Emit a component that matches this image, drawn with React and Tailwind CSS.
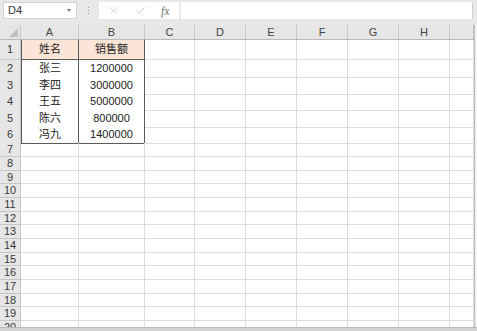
import React from "react";
import { X, Check } from "lucide-react";

const cols = ["A", "B", "C", "D", "E", "F", "G", "H", ""];
const gridCols = "grid grid-cols-[21px_58px_66px_50px_51px_51px_51px_51px_51px_24px]";

const data = [
  { n: 1, h: "h-[20px]", a: "姓名", b: "销售额", head: true },
  { n: 2, h: "h-[17px]", a: "张三", b: "1200000" },
  { n: 3, h: "h-[16px]", a: "李四", b: "3000000" },
  { n: 4, h: "h-[17px]", a: "王五", b: "5000000" },
  { n: 5, h: "h-[16px]", a: "陈六", b: "800000" },
  { n: 6, h: "h-[17px]", a: "冯九", b: "1400000" },
];

const emptyRows = [
  { n: 7, h: "h-[14px]" },
  { n: 8, h: "h-[14px]" },
  { n: 9, h: "h-[13px]" },
  { n: 10, h: "h-[14px]" },
  { n: 11, h: "h-[14px]" },
  { n: 12, h: "h-[13px]" },
  { n: 13, h: "h-[14px]" },
  { n: 14, h: "h-[14px]" },
  { n: 15, h: "h-[13px]" },
  { n: 16, h: "h-[14px]" },
  { n: 17, h: "h-[14px]" },
  { n: 18, h: "h-[13px]" },
  { n: 19, h: "h-[14px]" },
  { n: 20, h: "h-[14px]" },
];

const RowNum = ({ n }) => (
  <div className="bg-[#e6e6e6] border-r border-b border-[#c6c6c6] flex items-center justify-center text-[11px] text-[#3a3a3a] leading-none">
    {n}
  </div>
);

const Blank = () => <div className="border-r border-b border-[#dcdcdc]" />;

export default function App() {
  return (
    <div
      className="w-[477px] h-[331px] bg-[#e8e8e8] overflow-hidden flex flex-col"
      style={{ fontFamily: '"Liberation Sans", "Noto Sans CJK SC", sans-serif' }}
    >
      {/* Formula bar */}
      <div className="h-[20px] flex items-center pl-[3px] pr-[4px] pt-[1px] shrink-0">
        <div className="w-[74px] h-[17px] bg-white border border-[#d4d4d4] flex items-center justify-between pl-[4px] pr-[5px]">
          <span className="text-[11px] text-[#333]">D4</span>
          <span className="w-0 h-0 border-l-[2px] border-r-[2px] border-t-[3px] border-l-transparent border-r-transparent border-t-[#777]" />
        </div>
        <div className="w-[22px] flex flex-col items-center gap-[2px]">
          <span className="w-[1px] h-[1px] bg-[#999]" />
          <span className="w-[1px] h-[1px] bg-[#999]" />
          <span className="w-[1px] h-[1px] bg-[#999]" />
        </div>
        <div className="w-[80px] h-[17px] bg-white flex items-center">
          <X size={11} strokeWidth={1.5} className="text-[#c4c4c4] ml-[9px]" />
          <Check size={11} strokeWidth={2} className="text-[#c4c4c4] ml-[16px]" />
          <span
            className="ml-[15px] text-[12px] italic text-[#777] leading-none"
            style={{ fontFamily: '"Liberation Serif", serif' }}
          >
            fx
          </span>
        </div>
        <div className="flex-1 h-[17px] bg-white ml-[2px] border-r border-[#cfcfcf]" />
      </div>

      <div className="h-[5px] shrink-0" />

      <div className="flex-1 flex overflow-hidden">
        <div className="w-[474px] flex flex-col overflow-hidden bg-white">
          {/* Column headers */}
          <div className={`${gridCols} h-[15px] shrink-0 bg-[#e6e6e6] border-b border-[#b8b8b8]`}>
            <div className="relative border-r border-[#c6c6c6]">
              <svg className="absolute right-[2px] bottom-[2px]" width="9" height="9" viewBox="0 0 9 9">
                <polygon points="9,0 9,9 0,9" fill="#c0c0c0" />
              </svg>
            </div>
            {cols.map((c, i) => (
              <div
                key={i}
                className="border-r border-[#c6c6c6] flex items-center justify-center text-[11px] text-[#444] leading-none"
              >
                {c}
              </div>
            ))}
          </div>

          {/* Data rows */}
          {data.map((r) => (
            <div key={r.n} className={`${gridCols} ${r.h} shrink-0`}>
              <RowNum n={r.n} />
              <div
                className={`border-l border-r border-b border-[#5a5a5a] flex items-center justify-center text-[11px] text-[#222] ${r.head ? "bg-[#fce4d6]" : "bg-white"}`}
              >
                {r.a}
              </div>
              <div
                className={`border-r border-b border-[#5a5a5a] flex items-center justify-center text-[11px] text-[#222] ${r.head ? "bg-[#fce4d6]" : "bg-white"}`}
              >
                {r.b}
              </div>
              {cols.slice(2).map((_, i) => (
                <Blank key={i} />
              ))}
            </div>
          ))}

          {emptyRows.map((r) => (
            <div key={r.n} className={`${gridCols} ${r.h} shrink-0`}>
              <RowNum n={r.n} />
              {cols.map((_, i) => (
                <Blank key={i} />
              ))}
            </div>
          ))}
        </div>
        <div className="w-[1px] bg-[#bdbdbd]" />
        <div className="flex-1 bg-[#f2f2f2]" />
      </div>

      {/* bottom scroll strip */}
      <div className="h-[4px] shrink-0 bg-[#d2d2d2] border-t border-[#b8b8b8]" />
    </div>
  );
}
